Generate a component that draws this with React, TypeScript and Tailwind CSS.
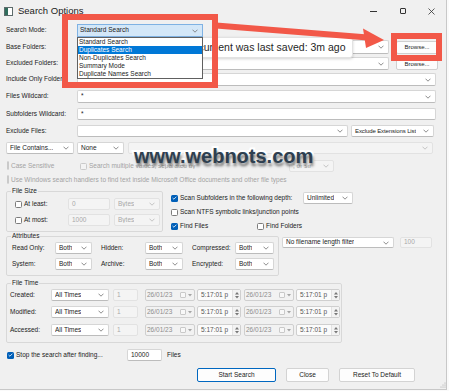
import clsx from 'clsx';
import type { ReactNode } from 'react';

function Chev({ dis }: { dis?: boolean }) {
  return (
    <svg width="6" height="4" viewBox="0 0 6 4" className="shrink-0">
      <path d="M0.5 0.7L3 3.2L5.5 0.7" fill="none" stroke={dis ? '#b8b8b8' : '#707070'} strokeWidth="0.8" />
    </svg>
  );
}

function Combo({ text, dis, className }: { text?: string; dis?: boolean; className?: string }) {
  return (
    <div
      className={clsx(
        'flex h-full items-center justify-between rounded-[2px] border pl-[3px] pr-[4px]',
        dis ? 'border-[#e2e2e2] bg-[#f4f4f4] text-[#a8a8a8]' : 'border-[#d6d6d6] border-b-[#bcbcbc] bg-white text-[#1b1b1b]',
        className,
      )}
    >
      <span className="truncate">{text}</span>
      <Chev dis={dis} />
    </div>
  );
}

function Field({ text, dis, className }: { text?: string; dis?: boolean; className?: string }) {
  return (
    <div
      className={clsx(
        'flex h-full items-center rounded-[2px] border pl-[3px]',
        dis ? 'border-[#e2e2e2] bg-[#f4f4f4] text-[#a8a8a8]' : 'border-[#d6d6d6] border-b-[#bcbcbc] bg-white text-[#1b1b1b]',
        className,
      )}
    >
      {text}
    </div>
  );
}

function Check({ on, dis }: { on?: boolean; dis?: boolean }) {
  if (on)
    return (
      <span className="flex h-[7px] w-[7px] shrink-0 items-center justify-center rounded-[1.5px] bg-[#005fb8]">
        <svg width="5" height="4" viewBox="0 0 5 4">
          <path d="M0.6 2L1.9 3.2L4.4 0.7" stroke="white" strokeWidth="0.8" fill="none" />
        </svg>
      </span>
    );
  return (
    <span
      className={clsx(
        'h-[7px] w-[7px] shrink-0 rounded-[1.5px] border',
        dis ? 'border-[#cacaca] bg-[#f3f3f3]' : 'border-[#7c7c7c] bg-white',
      )}
    />
  );
}

function Group({ title, className, children }: { title: string; className?: string; children: ReactNode }) {
  return (
    <fieldset className={clsx('rounded-[2px] border border-[#d8d8d8]', className)}>
      <legend className="ml-[4px] h-[8px] px-[1px] leading-[8px] text-[#1b1b1b]">{title}</legend>
      {children}
    </fieldset>
  );
}

function DateBox() {
  return (
    <div className="flex h-full w-[50px] items-center rounded-[2px] border border-[#cfcfcf] bg-[#f2f2f2] pl-[1px] pr-[2px] text-[#8d8d8d]">
      <span>26/01/23</span>
      <span className="ml-auto h-[6px] w-[6px] rounded-[1px] border border-[#c9c9c9] bg-[#f8f8f8]" />
      <svg width="4" height="3" viewBox="0 0 4 3" className="ml-[2px]">
        <path d="M0 0H4L2 2.5Z" fill="#a5a5a5" />
      </svg>
    </div>
  );
}

function TimeBox() {
  return (
    <div className="flex h-full w-[44px] items-center rounded-[2px] border border-[#cfcfcf] bg-[#fbfbfb] pl-[3px] text-[#555]">
      <span>5:17:01 p</span>
      <div className="ml-auto flex h-full w-[8px] flex-col items-center justify-center gap-[1px] border-l border-[#e2e2e2] bg-[#f3f3f3]">
        <svg width="4" height="3" viewBox="0 0 4 3">
          <path d="M0 2.5H4L2 0Z" fill="#777" />
        </svg>
        <svg width="4" height="3" viewBox="0 0 4 3">
          <path d="M0 0H4L2 2.5Z" fill="#777" />
        </svg>
      </div>
    </div>
  );
}

function TimeRow({ label }: { label: string }) {
  return (
    <div className="flex h-[12px] items-center">
      <span className="w-[41px]">{label}</span>
      <Combo text="All Times" className="w-[58px]" />
      <Field text="1" dis className="ml-[4px] w-[25px]" />
      <div className="ml-[7px] h-full">
        <DateBox />
      </div>
      <div className="ml-[2px] h-full">
        <TimeBox />
      </div>
      <div className="ml-[3px] h-full">
        <DateBox />
      </div>
      <div className="ml-[2px] h-full">
        <TimeBox />
      </div>
    </div>
  );
}

function AttrRow({ a, b, c }: { a: string; b: string; c: string }) {
  return (
    <div className="flex h-[12px] items-center">
      <span className="w-[43px]">{a}</span>
      <Combo text="Both" className="w-[37px]" />
      <span className="ml-[9px] w-[44px]">{b}</span>
      <Combo text="Both" className="w-[38px]" />
      <span className="ml-[9px] w-[43px]">{c}</span>
      <Combo text="Both" className="w-[39px]" />
    </div>
  );
}

const modes = ['Standard Search', 'Duplicates Search', 'Non-Duplicates Search', 'Summary Mode', 'Duplicate Names Search'];

export default function App() {
  return (
    <div className="relative h-[391px] w-[449px] overflow-hidden bg-[#fafafa] font-['Liberation_Sans',Arial,sans-serif] text-[6.5px] leading-none text-[#1b1b1b]">
      <div className="flex h-[390px] w-[447px] flex-col border-b border-r border-[#c8c8c8] bg-[#f0f0f0]">
        {/* title bar */}
        <div className="flex h-[22px] shrink-0 items-center">
          <svg width="9" height="9" viewBox="0 0 9 9" className="ml-[4px]">
            <rect x="0.5" y="0.5" width="8" height="8" fill="#fff" stroke="#5d6b6b" />
            <rect x="1" y="1" width="3" height="7" fill="#2f6d5c" />
          </svg>
          <span className="ml-[5px] text-[9.5px] text-[#1a1a1a]">Search Options</span>
          <div className="ml-auto flex h-full">
            <div className="flex h-full w-[29px] items-center justify-center">
              <span className="h-px w-[7px] bg-[#333]" />
            </div>
            <div className="flex h-full w-[29px] items-center justify-center">
              <span className="h-[6px] w-[6px] rounded-[1px] border border-[#333]" />
            </div>
            <div className="flex h-full w-[29px] items-center justify-center">
              <svg width="7" height="7" viewBox="0 0 7 7">
                <path d="M0.5 0.5L6.5 6.5M6.5 0.5L0.5 6.5" stroke="#333" strokeWidth="0.8" />
              </svg>
            </div>
          </div>
        </div>

        <div className="flex flex-col pl-[6px]">
          {/* search mode */}
          <div className="mt-[2px] flex h-[13px] items-center">
            <span className="w-[71px]">Search Mode:</span>
            <div className="relative h-full w-[126px]">
              <div className="flex h-full items-center justify-between border border-[#7fb2e3] bg-[#d3e7f8] pl-[2px] pr-[4px]">
                <span>Standard Search</span>
                <Chev />
              </div>
              <div className="absolute left-0 top-[13px] z-20 w-[126px] border border-[#606060] bg-white">
                {modes.map((m) => (
                  <div
                    key={m}
                    className={clsx(
                      'h-[8px] pl-[1px] leading-[8px]',
                      m === 'Duplicates Search' ? 'bg-[#0078d7] text-white' : 'text-[#1b1b1b]',
                    )}
                  >
                    {m}
                  </div>
                ))}
              </div>
            </div>
          </div>

          <div className="mt-[3px] flex h-[14px] items-center">
            <span className="w-[71px]">Base Folders:</span>
            <Combo className="w-[312px]" />
            <div className="ml-[7px] flex h-[13px] w-[42px] items-center justify-center rounded-[2px] border border-[#d0d0d0] bg-[#fdfdfd] text-[6px]">
              Browse...
            </div>
          </div>

          <div className="mt-[3px] flex h-[13px] items-center">
            <span className="w-[71px]">Excluded Folders:</span>
            <Combo className="w-[312px]" />
            <div className="ml-[7px] flex h-[12px] w-[42px] items-center justify-center rounded-[2px] border border-[#d0d0d0] bg-[#fdfdfd] text-[6px]">
              Browse...
            </div>
          </div>

          <div className="mt-[3px] flex h-[13px] items-center">
            <span className="w-[71px]">Include Only Folders:</span>
            <Combo className="w-[359px]" />
          </div>

          <div className="mt-[4px] flex h-[13px] items-center">
            <span className="w-[71px]">Files Wildcard:</span>
            <Combo text="*" className="w-[359px]" />
          </div>

          <div className="mt-[5px] flex h-[12px] items-center">
            <span className="w-[71px]">Subfolders Wildcard:</span>
            <Field text="*" className="w-[359px]" />
          </div>

          <div className="mt-[5px] flex h-[12px] items-center">
            <span className="w-[71px]">Exclude Files:</span>
            <Combo className="w-[271px]" />
            <Combo text="Exclude Extensions List" className="ml-[3px] w-[83px] pl-[2px] pr-[3px] text-[6px] tracking-[-0.1px]" />
          </div>

          <div className="mt-[5px] flex h-[12px] items-center">
            <Combo text="File Contains..." className="w-[68px]" />
            <Combo text="None" className="ml-[3px] w-[47px]" />
            <Combo dis className="ml-[4px] w-[305px]" />
          </div>

          <div className="mt-[6px] flex h-[12px] items-center text-[#a3a3a3]">
            <span className="ml-[1px]">
              <Check dis />
            </span>
            <span className="ml-[2px] w-[69px]">Case Sensitive</span>
            <Check dis />
            <span className="ml-[2px] w-[200px] truncate">Search multiple values, separated by</span>
            <Combo dis text="; or str" className="w-[45px]" />
          </div>

          <div className="mt-[2px] flex h-[12px] items-center text-[#a3a3a3]">
            <span className="ml-[1px]">
              <Check dis />
            </span>
            <span className="ml-[2px]">
              Use Windows search handlers to find text inside Microsoft Office documents and other file types
            </span>
          </div>

          {/* file size + scan options */}
          <div className="mt-[1px] flex items-start">
            <Group title="File Size" className="w-[157px]">
              <div className="pb-[5px] pl-[8px]">
                <div className="mt-[3px] flex h-[12px] items-center">
                  <Check />
                  <span className="ml-[2px] w-[44px]">At least:</span>
                  <Field dis text="0" className="w-[42px]" />
                  <Combo dis text="Bytes" className="ml-[4px] w-[46px]" />
                </div>
                <div className="mt-[4px] flex h-[12px] items-center">
                  <Check />
                  <span className="ml-[2px] w-[44px]">At most:</span>
                  <Field dis text="1000" className="w-[42px]" />
                  <Combo dis text="Bytes" className="ml-[4px] w-[46px]" />
                </div>
              </div>
            </Group>
            <div className="ml-[8px] flex flex-col">
              <div className="mt-[5px] flex h-[12px] items-center">
                <Check on />
                <span className="ml-[2px] w-[123px]">Scan Subfolders in the following depth:</span>
                <Combo text="Unlimited" className="w-[50px]" />
              </div>
              <div className="mt-[2px] flex h-[12px] items-center">
                <Check />
                <span className="ml-[2px]">Scan NTFS symbolic links/junction points</span>
              </div>
              <div className="mt-[2px] flex h-[12px] items-center">
                <Check on />
                <span className="ml-[2px] w-[77px]">Find Files</span>
                <Check />
                <span className="ml-[2px]">Find Folders</span>
              </div>
            </div>
          </div>

          {/* attributes */}
          <div className="flex items-start">
            <Group title="Attributes" className="w-[273px]">
              <div className="pb-[5px] pl-[5px]">
                <div className="mt-[2px]">
                  <AttrRow a="Read Only:" b="Hidden:" c="Compressed:" />
                </div>
                <div className="mt-[4px]">
                  <AttrRow a="System:" b="Archive:" c="Encrypted:" />
                </div>
              </div>
            </Group>
            <div className="ml-[3px] mt-[5px] flex h-[11px] items-center">
              <Combo text="No filename length filter" className="w-[112px]" />
              <Field dis text="100" className="ml-[6px] w-[32px]" />
            </div>
          </div>

          {/* file time */}
          <Group title="File Time" className="mt-[3px] w-[336px]">
            <div className="pb-[6px] pl-[3px]">
              <div className="mt-[2px]">
                <TimeRow label="Created:" />
              </div>
              <div className="mt-[5px]">
                <TimeRow label="Modified:" />
              </div>
              <div className="mt-[6px]">
                <TimeRow label="Accessed:" />
              </div>
            </div>
          </Group>

          <div className="mt-[6px] flex h-[12px] items-center">
            <span className="ml-[1px]">
              <Check on />
            </span>
            <span className="ml-[2px] w-[111px]">Stop the search after finding...</span>
            <Field text="10000" className="w-[35px]" />
            <span className="ml-[5px]">Files</span>
          </div>

          <div className="mt-[7px] flex h-[14px] items-center">
            <div className="ml-[191px] flex h-full w-[79px] items-center justify-center rounded-[2px] border border-[#0067c0] bg-[#fdfdfd]">
              Start Search
            </div>
            <div className="ml-[10px] flex h-full w-[43px] items-center justify-center rounded-[2px] border border-[#d3d3d3] bg-[#fdfdfd]">
              Close
            </div>
            <div className="ml-[10px] flex h-full w-[76px] items-center justify-center rounded-[2px] border border-[#d3d3d3] bg-[#fdfdfd]">
              Reset To Default
            </div>
          </div>
        </div>
      </div>

      {/* resize grip */}
      <svg width="7" height="7" viewBox="0 0 7 7" className="absolute left-[439px] top-[381px]">
        <circle cx="6" cy="2" r="0.5" fill="#999" />
        <circle cx="4" cy="4" r="0.5" fill="#999" />
        <circle cx="6" cy="4" r="0.5" fill="#999" />
        <circle cx="2" cy="6" r="0.5" fill="#999" />
        <circle cx="4" cy="6" r="0.5" fill="#999" />
        <circle cx="6" cy="6" r="0.5" fill="#999" />
      </svg>

      {/* tooltip */}
      <div className="absolute left-[178px] top-[37px] z-10 flex h-[21px] items-center rounded-[3px] border border-[#e2e2e2] bg-white px-[6px] text-[10.5px] text-[#1f1f1f] shadow-[0_1px_3px_rgba(0,0,0,0.18)]">
        Document was last saved: 3m ago
      </div>

      {/* annotations */}
      <svg width="449" height="391" viewBox="0 0 449 391" className="pointer-events-none absolute left-0 top-0 z-30">
        <rect x="65" y="17" width="150" height="68" fill="none" stroke="#f25848" strokeWidth="6" />
        <rect x="394" y="36" width="45" height="22" fill="none" stroke="#f25848" strokeWidth="6" />
        <line x1="216" y1="25.5" x2="368" y2="37.5" stroke="#f25848" strokeWidth="6" />
        <polygon points="363,28.5 366,48 384,40" fill="#f25848" />
      </svg>

      {/* watermark */}
      <div className="absolute left-[134px] top-[146px] z-40 text-[20px] font-bold leading-[20px] text-[#2e3f50] [-webkit-text-stroke:4px_white] [paint-order:stroke_fill] [text-shadow:1px_3px_3px_rgba(0,0,0,0.6)]">
        www.webnots.com
      </div>
    </div>
  );
}
